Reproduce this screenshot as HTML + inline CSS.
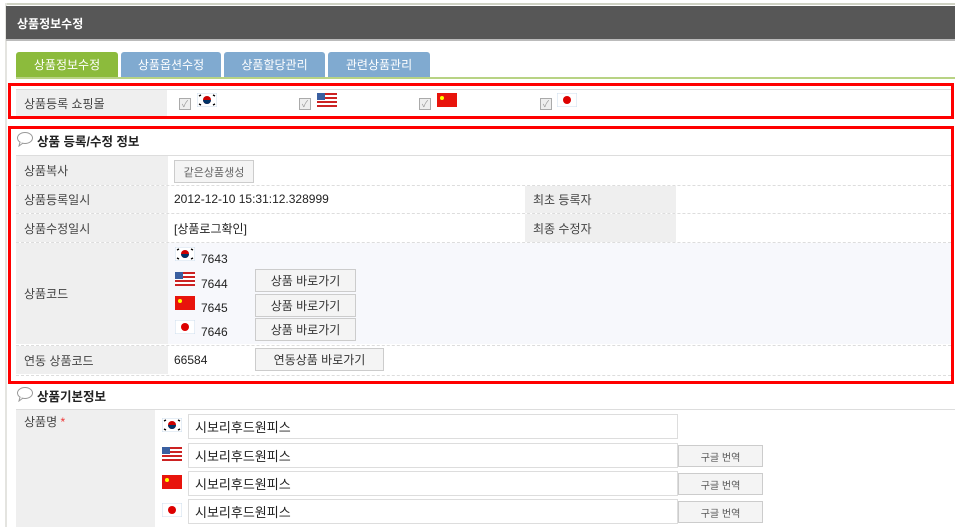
<!DOCTYPE html>
<html><head><meta charset="utf-8"><style>
*{margin:0;padding:0;box-sizing:border-box}
body{width:955px;height:527px;overflow:hidden;background:#fff;font-family:"Liberation Sans","Noto Sans CJK KR",sans-serif;font-size:12px;color:#222;position:relative}
.a{position:absolute}
.lbl{position:absolute;background:#efefef;color:#444;padding-left:8px;display:flex;align-items:center}
.tab{position:absolute;top:52px;height:25px;color:#fff;display:flex;align-items:center;justify-content:center;font-size:12px;border-radius:3px 3px 0 0}
.btn{position:absolute;background:#f4f4f4;border:1px solid #ccc;display:flex;align-items:center;justify-content:center;font-size:12px;color:#333}
.dash{position:absolute;left:16px;right:4px;border-top:1px dashed #ddd}
.cb{position:absolute;width:12px;height:12px;border:1px solid #aaa;background:#eee;font-size:9px;color:#999;line-height:10px;text-align:center}
.fl{position:absolute;width:20px;height:14px}
.inp{position:absolute;left:188px;width:490px;height:25px;border:1px solid #ddd;padding-left:6px;display:flex;align-items:center;font-size:13px}
</style></head><body>
<div class="a" style="left:5px;top:3px;width:950px;height:2px;background:#cfd2c4"></div>
<div class="a" style="left:5px;top:3px;width:2px;height:524px;background:#e4e4e0"></div>
<div class="a" style="left:6px;top:6px;width:949px;height:35px;background:#575757;border-bottom:2px solid #bbb"></div>
<div class="a" style="left:17px;top:15px;color:#fff;font-weight:bold;font-size:12px">상품정보수정</div>

<div class="tab" style="left:16px;width:102px;background:#8cbb3c">상품정보수정</div>
<div class="tab" style="left:121px;width:100px;background:#80aad0">상품옵션수정</div>
<div class="tab" style="left:224px;width:101px;background:#80aad0">상품할당관리</div>
<div class="tab" style="left:328px;width:102px;background:#80aad0">관련상품관리</div>
<div class="a" style="left:16px;top:77px;width:939px;height:2px;background:#b8d384"></div>

<!-- box1 -->
<div class="a" style="left:16px;top:89px;width:935px;height:1px;background:#ddd"></div>
<div class="lbl" style="left:16px;top:90px;width:151px;height:26px">상품등록 쇼핑몰</div>
<div class="cb" style="left:179px;top:98px">✓</div>
<svg class="fl" style="left:197px;top:93px" viewBox="0 0 20 14"><rect width="20" height="14" fill="#fff" stroke="#cde" /><circle cx="10" cy="7" r="4" fill="#c00"/><path d="M6 7a4 4 0 0 0 8 0z" fill="#036"/><g stroke="#000" stroke-width="1.3"><path d="M2 3l2-1M16 2l2 1M2 11l2 1M16 12l2-1"/></g></svg>
<div class="cb" style="left:299px;top:98px">✓</div>
<svg class="fl" style="left:317px;top:93px" viewBox="0 0 20 14"><rect width="20" height="14" fill="#fff"/><g fill="#c22"><rect y="0" width="20" height="2"/><rect y="4" width="20" height="2"/><rect y="8" width="20" height="2"/><rect y="12" width="20" height="2"/></g><rect width="8" height="7" fill="#3a5fa0"/></svg>
<div class="cb" style="left:419px;top:98px">✓</div>
<svg class="fl" style="left:437px;top:93px" viewBox="0 0 20 14"><rect width="20" height="14" fill="#e8140c"/><circle cx="5" cy="5" r="2" fill="#ff0"/></svg>
<div class="cb" style="left:540px;top:98px">✓</div>
<svg class="fl" style="left:557px;top:93px" viewBox="0 0 20 14"><rect width="20" height="14" fill="#fff" stroke="#cde"/><circle cx="10" cy="7" r="4" fill="#d00"/></svg>
<div class="a" style="left:8px;top:83px;width:946px;height:36px;border:3px solid #f00"></div>

<!-- box2 -->
<svg class="a" style="left:16px;top:131px" width="18" height="16" viewBox="0 0 18 16"><ellipse cx="9" cy="7" rx="7.5" ry="5.5" fill="#fff" stroke="#999"/><path d="M4 11l-1 4 4-3" fill="#fff" stroke="#999"/></svg>
<div class="a" style="left:37px;top:131px;font-weight:bold;font-size:12.5px">상품 등록/수정 정보</div>
<div class="a" style="left:16px;top:155px;width:935px;height:1px;background:#ddd"></div>
<div class="lbl" style="left:16px;top:156px;width:152px;height:29px">상품복사</div>
<div class="btn" style="left:174px;top:160px;width:80px;height:23px;color:#666;font-size:11px">같은상품생성</div>
<div class="dash" style="top:185px"></div>
<div class="lbl" style="left:16px;top:186px;width:152px;height:27px">상품등록일시</div>
<div class="a" style="left:174px;top:192px">2012-12-10 15:31:12.328999</div>
<div class="lbl" style="left:525px;top:186px;width:151px;height:27px">최초 등록자</div>
<div class="dash" style="top:213px"></div>
<div class="lbl" style="left:16px;top:214px;width:152px;height:28px">상품수정일시</div>
<div class="a" style="left:174px;top:220px">[상품로그확인]</div>
<div class="lbl" style="left:525px;top:214px;width:151px;height:28px">최종 수정자</div>
<div class="dash" style="top:242px"></div>
<div class="a" style="left:168px;top:243px;width:783px;height:101px;background:#f7f8fc"></div>
<div class="lbl" style="left:16px;top:243px;width:152px;height:101px">상품코드</div>
<svg class="fl" style="left:175px;top:247px" viewBox="0 0 20 14"><rect width="20" height="14" fill="#fff" stroke="#cde"/><circle cx="10" cy="7" r="4" fill="#c00"/><path d="M6 7a4 4 0 0 0 8 0z" fill="#036"/><g stroke="#000" stroke-width="1.3"><path d="M2 3l2-1M16 2l2 1M2 11l2 1M16 12l2-1"/></g></svg>
<div class="a" style="left:201px;top:252px">7643</div>
<svg class="fl" style="left:175px;top:272px" viewBox="0 0 20 14"><rect width="20" height="14" fill="#fff"/><g fill="#c22"><rect y="0" width="20" height="2"/><rect y="4" width="20" height="2"/><rect y="8" width="20" height="2"/><rect y="12" width="20" height="2"/></g><rect width="8" height="7" fill="#3a5fa0"/></svg>
<div class="a" style="left:201px;top:277px">7644</div>
<div class="btn" style="left:255px;top:269px;width:101px;height:23px">상품 바로가기</div>
<svg class="fl" style="left:175px;top:296px" viewBox="0 0 20 14"><rect width="20" height="14" fill="#e8140c"/><circle cx="5" cy="5" r="2" fill="#ff0"/></svg>
<div class="a" style="left:201px;top:301px">7645</div>
<div class="btn" style="left:255px;top:294px;width:101px;height:23px">상품 바로가기</div>
<svg class="fl" style="left:175px;top:320px" viewBox="0 0 20 14"><rect width="20" height="14" fill="#fff" stroke="#cde"/><circle cx="10" cy="7" r="4" fill="#d00"/></svg>
<div class="a" style="left:201px;top:325px">7646</div>
<div class="btn" style="left:255px;top:318px;width:101px;height:23px">상품 바로가기</div>
<div class="dash" style="top:345px"></div>
<div class="lbl" style="left:16px;top:346px;width:152px;height:28px">연동 상품코드</div>
<div class="a" style="left:174px;top:353px">66584</div>
<div class="btn" style="left:255px;top:348px;width:129px;height:23px">연동상품 바로가기</div>
<div class="dash" style="top:375px"></div>
<div class="a" style="left:8px;top:126px;width:946px;height:258px;border:3px solid #f00"></div>

<!-- section 2 -->
<svg class="a" style="left:16px;top:386px" width="18" height="16" viewBox="0 0 18 16"><ellipse cx="9" cy="7" rx="7.5" ry="5.5" fill="#fff" stroke="#999"/><path d="M4 11l-1 4 4-3" fill="#fff" stroke="#999"/></svg>
<div class="a" style="left:37px;top:386px;font-weight:bold;font-size:12.5px">상품기본정보</div>
<div class="a" style="left:16px;top:409px;width:939px;height:1px;background:#ddd"></div>
<div class="a" style="left:16px;top:410px;width:139px;height:117px;background:#efefef"></div>
<div class="a" style="left:24px;top:413px;color:#444">상품명 <span style="color:#e33">*</span></div>
<svg class="fl" style="left:162px;top:418px" viewBox="0 0 20 14"><rect width="20" height="14" fill="#fff" stroke="#cde"/><circle cx="10" cy="7" r="4" fill="#c00"/><path d="M6 7a4 4 0 0 0 8 0z" fill="#036"/><g stroke="#000" stroke-width="1.3"><path d="M2 3l2-1M16 2l2 1M2 11l2 1M16 12l2-1"/></g></svg>
<div class="inp" style="top:414px">시보리후드원피스</div>
<svg class="fl" style="left:162px;top:447px" viewBox="0 0 20 14"><rect width="20" height="14" fill="#fff"/><g fill="#c22"><rect y="0" width="20" height="2"/><rect y="4" width="20" height="2"/><rect y="8" width="20" height="2"/><rect y="12" width="20" height="2"/></g><rect width="8" height="7" fill="#3a5fa0"/></svg>
<div class="inp" style="top:443px">시보리후드원피스</div>
<div class="btn" style="left:678px;top:445px;width:85px;height:22px;font-size:10px;color:#555">구글 번역</div>
<svg class="fl" style="left:162px;top:475px" viewBox="0 0 20 14"><rect width="20" height="14" fill="#e8140c"/><circle cx="5" cy="5" r="2" fill="#ff0"/></svg>
<div class="inp" style="top:471px">시보리후드원피스</div>
<div class="btn" style="left:678px;top:473px;width:85px;height:22px;font-size:10px;color:#555">구글 번역</div>
<svg class="fl" style="left:162px;top:503px" viewBox="0 0 20 14"><rect width="20" height="14" fill="#fff" stroke="#cde"/><circle cx="10" cy="7" r="4" fill="#d00"/></svg>
<div class="inp" style="top:499px">시보리후드원피스</div>
<div class="btn" style="left:678px;top:501px;width:85px;height:22px;font-size:10px;color:#555">구글 번역</div>
</body></html>
